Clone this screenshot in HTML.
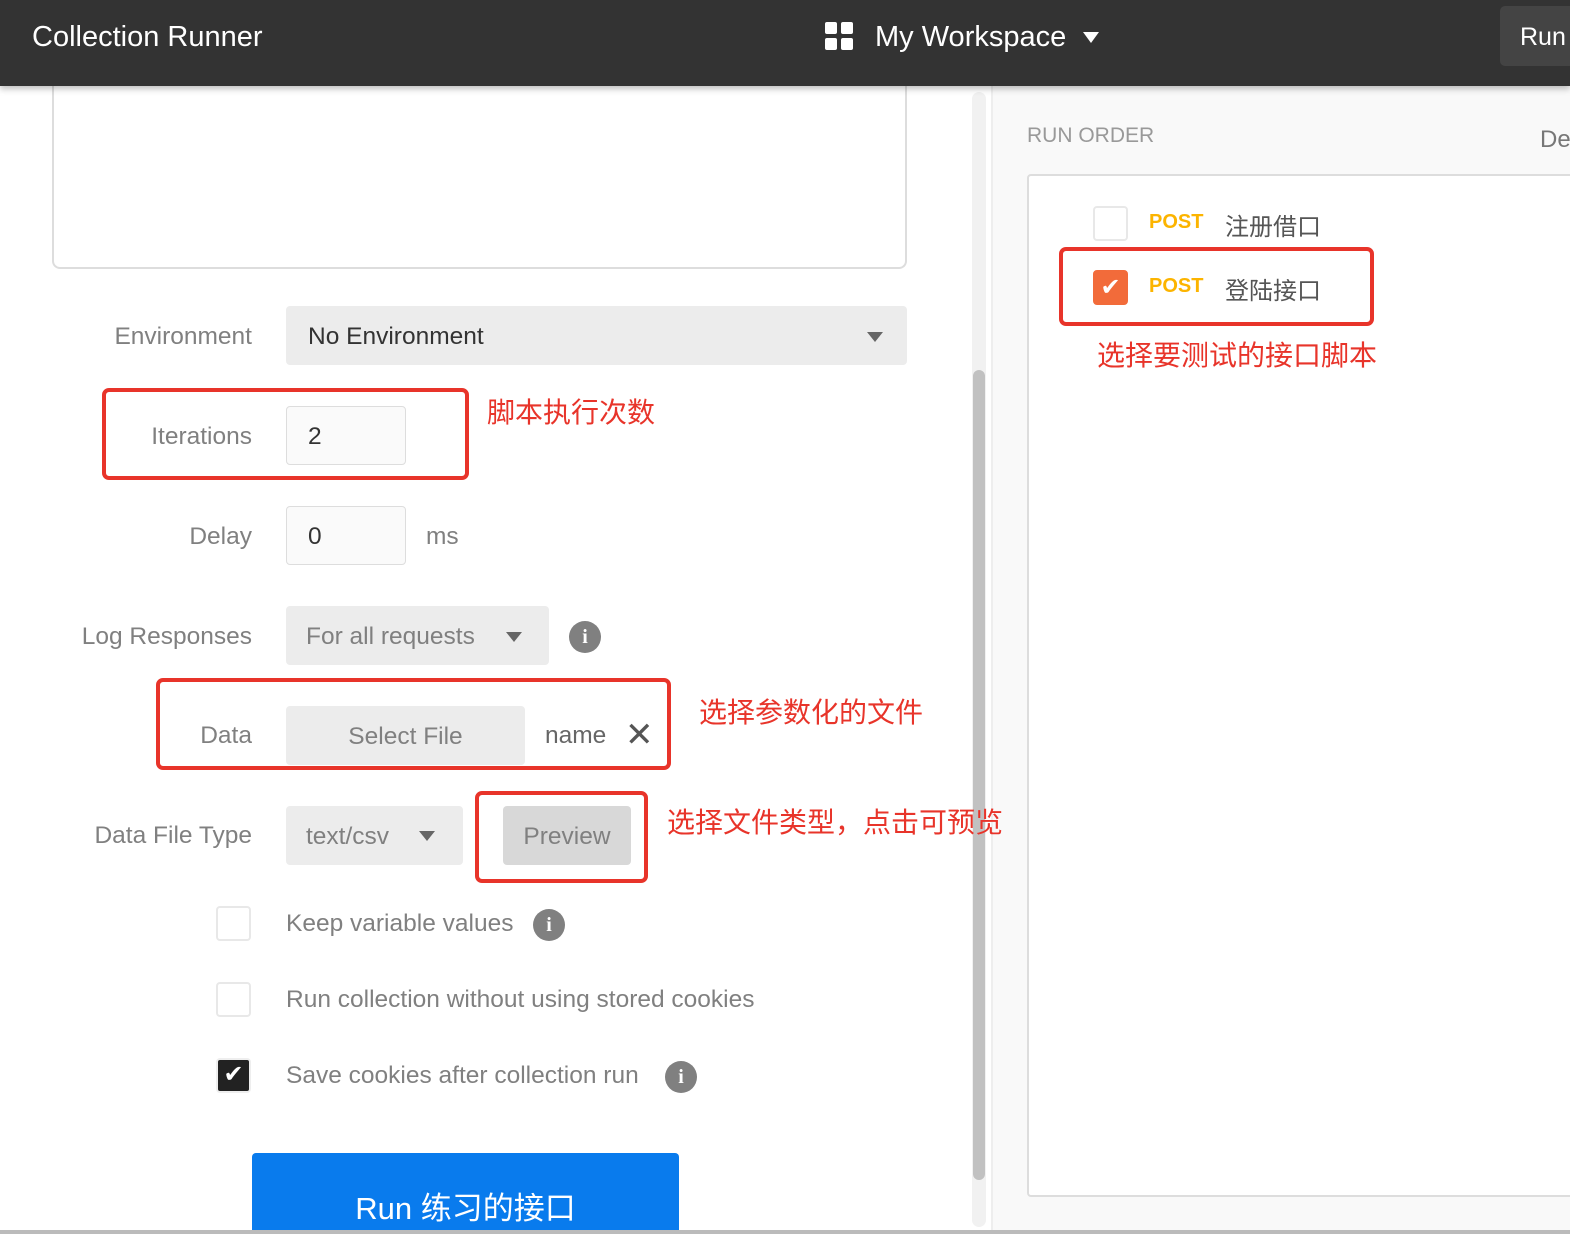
<!DOCTYPE html>
<html><head><meta charset="utf-8"><style>
*{box-sizing:border-box;margin:0;padding:0}
body{width:1570px;height:1234px;overflow:hidden;background:#fff;position:relative;font-family:"Liberation Sans","Noto Sans CJK SC",sans-serif;color:#555}
.a{position:absolute}
.lbl{position:absolute;color:#808080;font-size:24.5px;text-align:right;width:200px;left:52px}
.box{position:absolute;background:#ececec;border-radius:4px;font-size:24.5px;color:#555}
.in{position:absolute;background:#fafafa;border:1px solid #ddd;border-radius:4px;font-size:24.5px;color:#333;padding-left:21px}
.red{position:absolute;border:4px solid #e8342a;border-radius:7px}
.note{position:absolute;color:#e8342a;font-size:28px;z-index:5}
.cb{position:absolute;width:35px;height:35px;border:2px solid #e8e8e8;border-radius:4px;background:#fff}
.info{position:absolute;width:32px;height:32px;border-radius:50%;background:#808080;color:#fff;font-weight:bold;font-size:20px;text-align:center;line-height:32px;font-family:"Liberation Serif",serif}
.tri{position:absolute;width:0;height:0;border-left:8px solid transparent;border-right:8px solid transparent;border-top:10px solid #666}
</style></head><body>
<div class="a" style="left:0;top:0;width:1570px;height:86px;background:#333;box-shadow:0 3px 6px rgba(0,0,0,.25);z-index:2"></div>
<div class="a" style="left:32px;top:21px;color:#fff;font-size:29px;z-index:3">Collection Runner</div>
<div class="a" style="left:825px;top:22px;z-index:3;width:28px;height:28px">
<div class="a" style="left:0;top:0;width:12px;height:12px;background:#fff;border-radius:2px"></div><div class="a" style="left:16px;top:0;width:12px;height:12px;background:#fff;border-radius:2px"></div><div class="a" style="left:0;top:16px;width:12px;height:12px;background:#fff;border-radius:2px"></div><div class="a" style="left:16px;top:16px;width:12px;height:12px;background:#fff;border-radius:2px"></div></div>
<div class="a" style="left:875px;top:21px;color:#fff;font-size:29px;z-index:3">My Workspace</div>
<div class="a" style="left:1083px;top:32px;z-index:3;border-left:8px solid transparent;border-right:8px solid transparent;border-top:11px solid #fff;width:0;height:0"></div>
<div class="a" style="left:1500px;top:6px;width:80px;height:60px;background:#444;border-radius:5px;z-index:3"></div>
<div class="a" style="left:1520px;top:23px;color:#fff;font-size:25px;z-index:3">Run</div>

<div class="a" style="left:52px;top:70px;width:855px;height:199px;border:2px solid #ddd;border-top:none;border-radius:0 0 8px 8px"></div>

<div class="lbl" style="top:323px">Environment</div>
<div class="box" style="left:286px;top:306px;width:621px;height:59px;padding:17px 22px;color:#333">No Environment</div>
<div class="tri" style="left:867px;top:332px"></div>

<div class="lbl" style="top:423px">Iterations</div>
<div class="in" style="left:286px;top:406px;width:120px;height:59px;line-height:59px">2</div>
<div class="red" style="left:102px;top:388px;width:367px;height:92px"></div>
<div class="note" style="left:487px;top:391px">脚本执行次数</div>

<div class="lbl" style="top:523px">Delay</div>
<div class="in" style="left:286px;top:506px;width:120px;height:59px;line-height:59px">0</div>
<div class="a" style="left:426px;top:523px;font-size:24.5px;color:#808080">ms</div>

<div class="lbl" style="top:623px">Log Responses</div>
<div class="box" style="left:286px;top:606px;width:263px;height:59px;padding:17px 20px;color:#808080">For all requests</div>
<div class="tri" style="left:506px;top:632px"></div>
<div class="info" style="left:569px;top:621px">i</div>

<div class="lbl" style="top:722px">Data</div>
<div class="box" style="left:286px;top:706px;width:239px;height:59px;text-align:center;line-height:61px;color:#808080">Select File</div>
<div class="a" style="left:545px;top:722px;font-size:24.5px;color:#666">name</div>
<div class="a" style="left:625px;top:718px;font-size:34px;color:#555;line-height:34px">✕</div>
<div class="red" style="left:156px;top:678px;width:515px;height:92px"></div>
<div class="note" style="left:699px;top:691px">选择参数化的文件</div>

<div class="lbl" style="top:822px">Data File Type</div>
<div class="box" style="left:286px;top:806px;width:177px;height:59px;padding:17px 20px;color:#808080">text/csv</div>
<div class="tri" style="left:419px;top:831px"></div>
<div class="box" style="left:503px;top:806px;width:128px;height:59px;background:#d8d8d8;text-align:center;line-height:61px;color:#808080">Preview</div>
<div class="red" style="left:475px;top:791px;width:173px;height:92px"></div>
<div class="note" style="left:667px;top:801px">选择文件类型，点击可预览</div>

<div class="cb" style="left:216px;top:906px"></div>
<div class="a" style="left:286px;top:910px;font-size:24.5px;color:#808080">Keep variable values</div>
<div class="info" style="left:533px;top:909px">i</div>
<div class="cb" style="left:216px;top:982px"></div>
<div class="a" style="left:286px;top:986px;font-size:24.5px;color:#808080">Run collection without using stored cookies</div>
<div class="cb" style="left:216px;top:1058px;background:#222;border-color:#eee;color:#fff;font-size:24px;text-align:center;line-height:30px">✔</div>
<div class="a" style="left:286px;top:1062px;font-size:24.5px;color:#808080">Save cookies after collection run</div>
<div class="info" style="left:665px;top:1061px">i</div>

<div class="a" style="left:252px;top:1153px;width:427px;height:78px;background:#097bed;border-radius:4px 4px 0 0;color:#fff;font-size:31px;text-align:center;padding-top:30px;overflow:hidden">Run 练习的接口</div>

<div class="a" style="left:972px;top:92px;width:14px;height:1135px;background:#f1f1f1;border-radius:7px"></div>
<div class="a" style="left:973px;top:370px;width:12px;height:810px;background:#c1c1c1;border-radius:6px"></div>
<div class="a" style="left:991px;top:86px;width:2px;height:1148px;background:#eee"></div>

<div class="a" style="left:993px;top:86px;width:577px;height:1148px;background:#f9f9f9"></div>
<div class="a" style="left:1027px;top:124px;font-size:21px;color:#999">RUN ORDER</div>
<div class="a" style="left:1540px;top:126px;font-size:24px;color:#777">De</div>
<div class="a" style="left:1027px;top:174px;width:560px;height:1023px;background:#fff;border:2px solid #ddd;border-radius:4px"></div>
<div class="cb" style="left:1093px;top:206px"></div>
<div class="a" style="left:1149px;top:211px;font-size:20px;font-weight:bold;color:#fcb400">POST</div>
<div class="a" style="left:1225px;top:207px;font-size:24px;color:#555">注册借口</div>
<div class="cb" style="left:1093px;top:270px;background:#f26b3a;border-color:#f26b3a;color:#fff;text-align:center;line-height:31px;font-size:24px">✔</div>
<div class="a" style="left:1149px;top:275px;font-size:20px;font-weight:bold;color:#fcb400">POST</div>
<div class="a" style="left:1225px;top:271px;font-size:24px;color:#555">登陆接口</div>
<div class="red" style="left:1059px;top:247px;width:315px;height:79px"></div>
<div class="note" style="left:1097px;top:334px">选择要测试的接口脚本</div>
<div class="a" style="left:0;top:1230px;width:1570px;height:4px;background:#bbb;z-index:6"></div>
</body></html>
